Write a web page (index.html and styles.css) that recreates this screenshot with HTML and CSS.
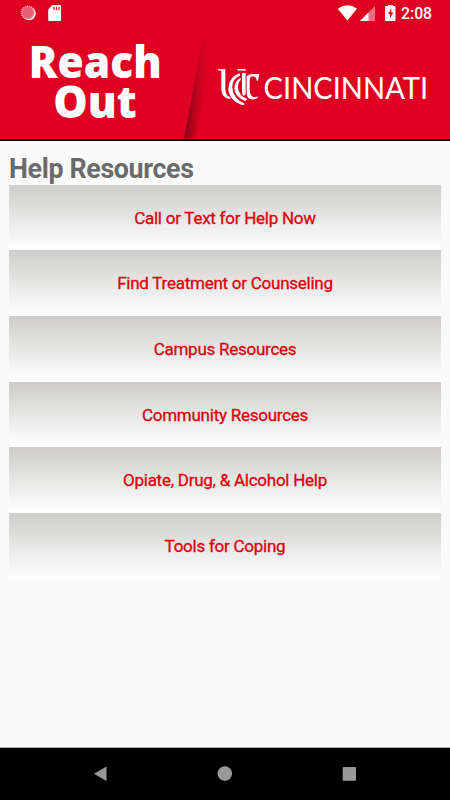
FILE: index.html
```html
<!DOCTYPE html>
<html lang="en">
<head>
<meta charset="utf-8">
<title>Help Resources</title>
<link rel="stylesheet" href="styles.css">
</head>
<body>
<div class="screen">
  <header class="header">
    <div class="status">
      <svg class="status-left" width="70" height="28" viewBox="0 0 70 28">
        <circle cx="29" cy="13.5" r="6.8" fill="#fff"/>
        <circle cx="27.8" cy="12.6" r="6.5" fill="#ec5d73"/>
        <circle cx="27.8" cy="12.6" r="6.3" fill="none" stroke="#f5a5b1" stroke-width="1.8" stroke-dasharray="1 1"/>
        <path d="M52.5 5H60q1 0 1 1V20q0 1-1 1H49.500q-1.300 0-1.300-1V9.500Z" fill="#fff"/>
        <path d="M54 7v3M56.500 7v3M59 7v3" stroke="#e00122" stroke-width="1.2"/>
      </svg>
      <svg class="status-icons" width="62" height="28" viewBox="0 0 62 28">
        <path d="M.8 8.700Q10.500 1.800 20 8.700L10.400 20.500Z" fill="#fff"/>
        <path d="M23 21 38 6V21Z" fill="#f06b80"/>
        <path d="M23 21 31.500 12.500V21Z" fill="#fff"/>
        <path d="M49 6h2V5h5v1h1.500q1 0 1 1V20q0 1-1 1H49q-1 0-1-1V7q0-1 1-1Z" fill="#fff"/>
        <path d="M54.400 8.500 51 14h2v4.500l3.300-6h-2Z" fill="#e00122"/>
      </svg>
      <span class="clock">2:08</span>
    </div>
    <svg class="banner" width="450" height="111" viewBox="0 28 450 111">
      <defs>
        <linearGradient id="fold" gradientUnits="userSpaceOnUse" x1="190" y1="110" x2="202" y2="112">
          <stop offset="0" stop-color="#8e0318"/>
          <stop offset=".35" stop-color="#ac0319"/>
          <stop offset="1" stop-color="#e00122"/>
        </linearGradient>
        <linearGradient id="fade" x1="0" y1="0" x2="0" y2="1">
          <stop offset="0" stop-color="#e00122"/>
          <stop offset=".3" stop-color="#e00122" stop-opacity=".75"/>
          <stop offset="1" stop-color="#e00122" stop-opacity="0"/>
        </linearGradient>
      </defs>
      <path d="M203 34 184 139H200L212 34Z" fill="url(#fold)"/>
      <path d="M182 28h35v100h-35Z" fill="url(#fade)"/>
      <text class="brand" x="28.800" y="78.200" textLength="133" lengthAdjust="spacingAndGlyphs">Reach</text>
      <text class="brand" x="53.200" y="117.800" textLength="83.500" lengthAdjust="spacingAndGlyphs">Out</text>
      <g transform="translate(214 62) scale(.33333)" fill="#fff">
        <path d="M12 21H34V82Q34 101 48 105L50 111Q22 110 22 82V26L12 25Z"/>
        <path d="M78 34V41Q55 49 55 77Q57 109 92 125L88 130Q45 117 43 80Q45 42 78 34Z"/>
        <path d="M80 47V54Q72 61 72 77Q74 101 100 111L94 117Q62 105 61 79Q62 56 80 47Z"/>
        <path d="M71 21H95V26H71Z"/>
        <path d="M84 33H95V92Q95 101 88 101Q84 98 84 90Z"/>
        <path d="M98 43Q105 35 119 36H136L132 56H128Q127 43 117 43Q108 44 107 54V84Q108 105 122 106Q127 106 130 103L132 107Q124 113 111 112Q98 110 98 92Z"/>
      </g>
      <text class="wordmark" x="263.600" y="98.900" textLength="164.500" lengthAdjust="spacingAndGlyphs">CINCINNATI</text>
    </svg>
  </header>
  <main class="content">
    <h1 class="title">Help Resources</h1>
    <nav class="menu">
      <a class="item">Call or Text for Help Now</a>
      <a class="item">Find Treatment or Counseling</a>
      <a class="item">Campus Resources</a>
      <a class="item">Community Resources</a>
      <a class="item">Opiate, Drug, &amp; Alcohol Help</a>
      <a class="item">Tools for Coping</a>
    </nav>
  </main>
  <footer class="navbar">
    <svg width="450" height="52" viewBox="0 0 450 52" fill="#999">
      <path d="M94 25.700 106.500 18.500V33Z"/>
      <circle cx="224.800" cy="25.600" r="7.300"/>
      <rect x="342.700" y="19" width="13.300" height="13.700" rx=".8"/>
    </svg>
  </footer>
</div>
</body>
</html>
```

FILE: styles.css
```css
body {
  margin: 0;
  font-family: Roboto, sans-serif;
}

.screen {
  display: flex;
  flex-direction: column;
  width: 450px;
  height: 800px;
  background: #fafafa;
  overflow: hidden;
}

.header {
  flex: none;
  height: 139px;
  background: #e00122;
  border-bottom: 2px solid #000;
}

.status {
  display: flex;
  height: 28px;
}

.status-icons {
  margin-left: auto;
}

.clock {
  width: 49px;
  padding-left: 2px;
  color: #fff;
  font-size: 15.800px;
  font-weight: 500;
  line-height: 28px;
}

.status-icons,
.status-left,
.banner,
.navbar svg {
  display: block;
}

.brand {
  fill: #fff;
  font: 800 44px "Open Sans", sans-serif;
}

.wordmark {
  fill: #fff;
  font: 400 30px Lato, sans-serif;
}

.content {
  flex: 1;
  padding: 11.700px 9px 0;
}

.title {
  margin: 0;
  color: #6b6b6b;
  font-size: 26.800px;
  font-weight: 700;
  letter-spacing: -.35px;
  line-height: 32px;
}

.menu {
  display: flex;
  flex-direction: column;
}

.item {
  height: 65.670px;
  color: #e00008;
  font-size: 17px;
  font-weight: 400;
  letter-spacing: -.25px;
  line-height: 66px;
  text-align: center;
  -webkit-text-stroke: .3px #e00008;
  background: linear-gradient(#cdccca, #fdfdfd 94%);
}

.navbar {
  flex: none;
  height: 53px;
  background: #000;
  border-top: 1px solid #aaa;
  box-sizing: border-box;
}
```
